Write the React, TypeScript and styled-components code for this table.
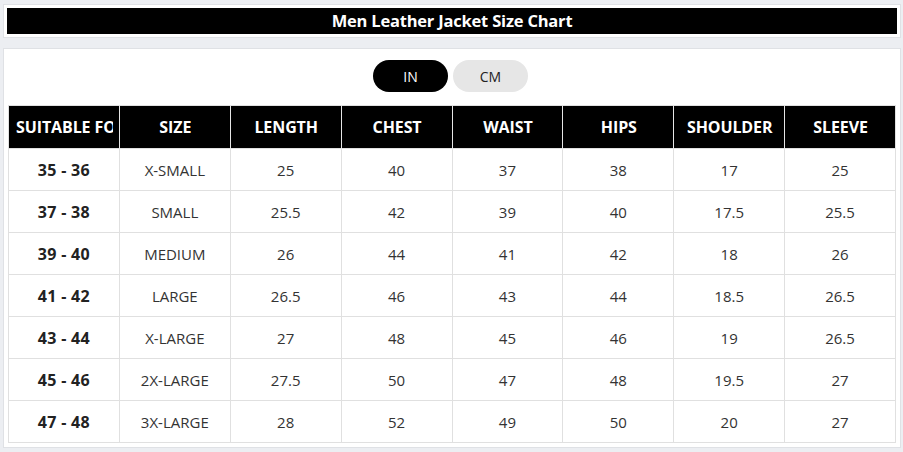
import React, { useState } from "react";
import styled, { createGlobalStyle } from "styled-components";

const Global = createGlobalStyle`
  html, body { margin: 0; padding: 0; background: #eceef2; }
  body { font-family: "Open Sans", "Liberation Sans", sans-serif; }
`;

const Page = styled.div`
  padding: 4px 2px 4px 3px;
  display: flex;
  flex-direction: column;
  gap: 10px;
`;

const TitleCard = styled.div`
  background: #fff;
  border: 1px solid #dfe1e5;
  padding: 3px 3px;
`;

const TitleBar = styled.h1`
  margin: 0;
  height: 26px;
  background: #000;
  color: #fff;
  font-size: 16.5px;
  font-weight: 700;
  line-height: 26px;
  text-align: center;
  letter-spacing: -0.2px;
`;

const Card = styled.div`
  background: #fff;
  border: 1px solid #dfe1e5;
  padding: 11px 4px 4px 4px;
  display: flex;
  flex-direction: column;
  gap: 13px;
`;

const Toggle = styled.div`
  display: flex;
  justify-content: center;
  gap: 5px;
  padding-right: 3px;
`;

const Pill = styled.button<{ $active: boolean }>`
  width: 75px;
  height: 32px;
  border: none;
  border-radius: 16px;
  font-family: "Open Sans", "Liberation Sans", sans-serif;
  font-size: 14px;
  cursor: pointer;
  background: ${(p) => (p.$active ? "#000" : "#e6e6e6")};
  color: ${(p) => (p.$active ? "#fff" : "#222")};
`;

const Table = styled.table`
  width: 888px;
  border-collapse: collapse;
  table-layout: fixed;
  border: 1px solid #e0e0e0;
`;

const Th = styled.th`
  height: 42px;
  padding: 0 6px 0 7px;
  background: #000;
  color: #fff;
  font-size: 16px;
  font-weight: 700;
  white-space: nowrap;
  border-left: 1px solid #e6e6e6;
  &:first-child { border-left: none; }
`;

const ThLabel = styled.div`
  overflow: hidden;
  text-overflow: clip;
  white-space: nowrap;
  letter-spacing: -0.1px;
`;

const Td = styled.td<{ $bold?: boolean }>`
  height: 41px;
  padding: 0 8px;
  text-align: center;
  font-size: ${(p) => (p.$bold ? "16px" : "15px")};
  color: ${(p) => (p.$bold ? "#222" : "#333")};
  font-weight: ${(p) => (p.$bold ? 700 : 400)};
  letter-spacing: ${(p) => (p.$bold ? "0.3px" : "0")};
  border: 1px solid #e0e0e0;
`;

const headers = ["SUITABLE FOR", "SIZE", "LENGTH", "CHEST", "WAIST", "HIPS", "SHOULDER", "SLEEVE"];

const dataIn: (string | number)[][] = [
  ["35 - 36", "X-SMALL", 25, 40, 37, 38, 17, 25],
  ["37 - 38", "SMALL", 25.5, 42, 39, 40, 17.5, 25.5],
  ["39 - 40", "MEDIUM", 26, 44, 41, 42, 18, 26],
  ["41 - 42", "LARGE", 26.5, 46, 43, 44, 18.5, 26.5],
  ["43 - 44", "X-LARGE", 27, 48, 45, 46, 19, 26.5],
  ["45 - 46", "2X-LARGE", 27.5, 50, 47, 48, 19.5, 27],
  ["47 - 48", "3X-LARGE", 28, 52, 49, 50, 20, 27],
];

const toCm = (v: string | number) =>
  typeof v === "number" ? String(Math.round(v * 2.54 * 10) / 10) : v;

export default function App() {
  const [unit, setUnit] = useState<"IN" | "CM">("IN");
  const rows = unit === "IN" ? dataIn : dataIn.map((r) => r.map((v, i) => (i < 2 ? v : toCm(v))));
  return (
    <>
      <Global />
      <Page>
        <TitleCard>
          <TitleBar>Men Leather Jacket Size Chart</TitleBar>
        </TitleCard>
        <Card>
          <Toggle>
            <Pill $active={unit === "IN"} onClick={() => setUnit("IN")}>IN</Pill>
            <Pill $active={unit === "CM"} onClick={() => setUnit("CM")}>CM</Pill>
          </Toggle>
          <Table>
            <thead>
              <tr>
                {headers.map((h) => (
                  <Th key={h}>
                    <ThLabel>{h}</ThLabel>
                  </Th>
                ))}
              </tr>
            </thead>
            <tbody>
              {rows.map((r, i) => (
                <tr key={i}>
                  {r.map((v, j) => (
                    <Td key={j} $bold={j === 0}>{String(v)}</Td>
                  ))}
                </tr>
              ))}
            </tbody>
          </Table>
        </Card>
      </Page>
    </>
  );
}
